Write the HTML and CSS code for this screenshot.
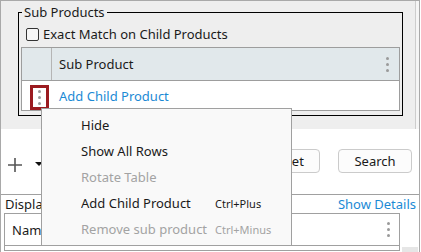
FILE: index.html
```html
<!DOCTYPE html>
<html lang="en">
<head>
    <meta charset="UTF-8">
    <title>Product Search</title>
    <link rel="stylesheet" href="styles.css">
</head>
<body>
    <div class="frame">
        <div class="top">
            <div class="filters">
                <fieldset class="sub-products">
                    <legend>Sub Products</legend>
                    <label class="check"><span class="check-box"></span>Exact Match on Child Products</label>
                    <div class="grid">
                        <div class="grid-head">
                            <div class="sel-col"></div>
                            <div class="col-title">Sub Product</div>
                            <span class="dots"><i></i><i></i><i></i></span>
                        </div>
                        <div class="grid-row">
                            <div class="sel-col">
                                <span class="row-menu"><span class="dots"><i></i><i></i><i></i></span></span>
                            </div>
                            <a class="link add-child">Add Child Product</a>
                        </div>
                    </div>
                </fieldset>
            </div>
            <div class="track"></div>
        </div>

        <div class="actions">
            <span class="plus">
                <svg width="14" height="14" viewBox="0 0 14 14"><path d="M7 0V14M0 7H14" stroke="#555" stroke-width="1.6"/></svg>
            </span>
            <span class="caret"></span>
            <div class="buttons">
                <button class="btn reset">Reset</button>
                <button class="btn search">Search</button>
            </div>
        </div>

        <div class="results">
            <div class="results-bar">
                <span>Display Results</span>
                <a class="link">Show Details</a>
            </div>
            <div class="results-body">
                <div class="results-grid">
                    <div class="results-head">
                        <span>Name</span>
                        <span class="dots"><i></i><i></i><i></i></span>
                    </div>
                </div>
                <div class="scroll"><span class="thumb"></span></div>
            </div>
        </div>

        <!-- context menu opened from the row menu -->
        <div class="context-menu">
            <div class="menu-item"><span class="label">Hide</span></div>
            <div class="menu-item"><span class="label">Show All Rows</span></div>
            <div class="menu-item disabled"><span class="label">Rotate Table</span></div>
            <div class="menu-item"><span class="label">Add Child Product</span><span class="shortcut">Ctrl+Plus</span></div>
            <div class="menu-item disabled"><span class="label">Remove sub product</span><span class="shortcut">Ctrl+Minus</span></div>
        </div>
    </div>
</body>
</html>
```

FILE: styles.css
```css
body {
    margin: 0;
    font-family: "Noto Sans", sans-serif;
    font-size: 13px;
    color: #1a1a1a;
    background: #fff;
}
.frame {
    position: relative;
    width: 418px;
    height: 251px;
    border: 1px solid #a9a9a9;
    border-bottom: none;
    overflow: hidden;
}
.top {
    display: flex;
    height: 128px;
}
.filters {
    width: 414px;
    background: #eeeeee;
    border-right: 1px solid #cdcdcd;
}
.track {
    flex: 1;
    background: #f5f5f5;
}
.sub-products {
    margin: 3px 12px 0 17px;
    padding: 0 2px 4px;
    border: 1px solid #000;
}
.sub-products legend {
    padding: 0 2px;
    margin-left: 1px;
    line-height: 16px;
}
.check {
    display: flex;
    align-items: center;
    gap: 4px;
    height: 20px;
    margin: 4px 0 0 5px;
}
.check-box {
    width: 11px;
    height: 11px;
    border: 1px solid #333;
    border-radius: 2px;
    background: #f6f6f6;
}
.grid {
    margin-top: 3px;
    border: 1px solid #9d9d9d;
    background: #fff;
}
.grid-head {
    display: flex;
    align-items: center;
    height: 32px;
    background: #e1e8eb;
    border-bottom: 1px solid #9d9d9d;
}
.grid-head .sel-col {
    height: 100%;
    border-right: 1px solid #b5b5b5;
}
.sel-col {
    width: 29px;
    flex-shrink: 0;
}
.col-title {
    flex: 1;
    padding-left: 7px;
}
.grid-head .dots {
    margin-right: 10px;
}
.dots {
    display: flex;
    flex-direction: column;
    gap: 3px;
}
.dots i {
    width: 3px;
    height: 3px;
    border-radius: 50%;
    background: #9a9a9a;
}
.grid-row {
    display: flex;
    align-items: center;
    height: 29px;
}
.grid-row .sel-col {
    height: 100%;
}
.row-menu {
    display: flex;
    align-items: center;
    justify-content: center;
    width: 13px;
    height: 19px;
    margin: 4px 0 0 8px;
    border: 3px solid #9b1b20;
}
.link {
    color: #1b8ad5;
    text-decoration: none;
}
.add-child {
    padding-left: 8px;
}
.actions {
    display: flex;
    align-items: flex-start;
    height: 65px;
}
.plus {
    display: flex;
    margin: 29px 0 0 7px;
}
.caret {
    margin: 33px 0 0 13px;
    border-left: 4px solid transparent;
    border-right: 4px solid transparent;
    border-top: 4px solid #111;
}
.buttons {
    display: flex;
    gap: 18px;
    margin: 20px 7px 0 auto;
}
.btn {
    height: 24px;
    padding: 0;
    border: 1px solid #cbcbcb;
    border-radius: 4px;
    background: #fcfcfc;
    font-family: inherit;
    font-size: 13px;
    color: #1a1a1a;
}
.reset { width: 66px; }
.search { width: 74px; }
.results {
    border-top: 1px solid #a0a0a0;
}
.results-bar {
    display: flex;
    justify-content: space-between;
    height: 18px;
    line-height: 18px;
    padding: 0 3px 0 4px;
}
.results-body {
    display: flex;
}
.results-grid {
    width: 394px;
    height: 36px;
    margin-left: 3px;
    border: 1px solid #a0a0a0;
}
.results-head {
    display: flex;
    align-items: center;
    justify-content: space-between;
    height: 31px;
    padding: 0 9px 0 7px;
    border-bottom: 1px solid #a0a0a0;
}
.scroll {
    display: flex;
    margin-left: 2px;
}
.thumb {
    width: 16px;
    height: 8px;
    margin-top: 34px;
    background: #e6e6e6;
}
.context-menu {
    position: absolute;
    left: 40px;
    top: 107px;
    width: 249px;
    padding: 3px 0;
    background: #f9f9f9;
    border: 1px solid #a0a0a0;
}
.menu-item {
    display: flex;
    align-items: center;
    height: 26px;
    padding-left: 39px;
}
.menu-item .label {
    width: 134px;
    white-space: nowrap;
    overflow: hidden;
}
.menu-item .shortcut {
    font-size: 11px;
}
.menu-item.disabled {
    color: #a3a3a3;
}
```
